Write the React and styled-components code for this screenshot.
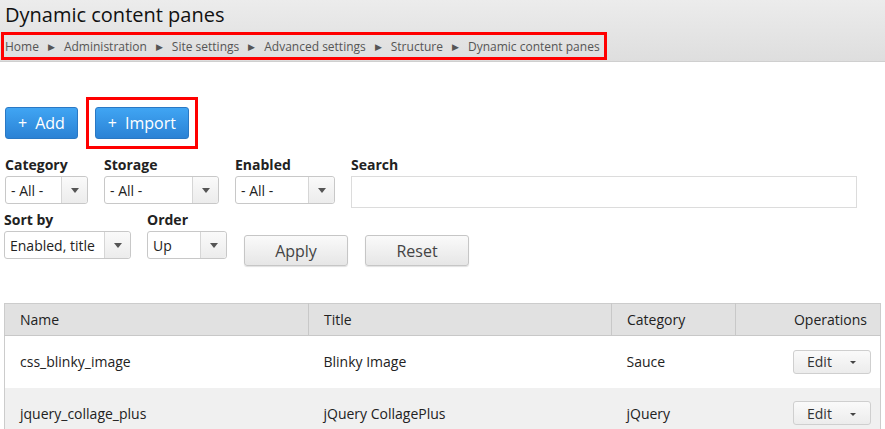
import React from "react";
import styled, { createGlobalStyle } from "styled-components";

const Global = createGlobalStyle`
  html, body { margin: 0; padding: 0; background: #fff; }
  body { font-family: "Open Sans", "Noto Sans", sans-serif; color: #222; }
  * { box-sizing: border-box; }
`;

const Header = styled.header`
  height: 62px;
  background: linear-gradient(#ececec, #dedede);
  border-bottom: 1px solid #cfcfcf;
  padding: 1px 0 0 5px;
`;

const Title = styled.h1`
  margin: 0;
  font-weight: 400;
  font-size: 20px;
  line-height: 28px;
  color: #111;
`;

const Highlight = styled.div`
  display: inline-flex;
  border: 3px solid #f00;
  margin: 3px 0 0 -4px;
  padding: 0 4px 0 1px;
  height: 28px;
  align-items: center;
`;

const Crumbs = styled.nav`
  display: flex;
  align-items: center;
  font-size: 12px;
  color: #555;
`;

const Sep = styled.span`
  font-size: 9px;
  color: #555;
  margin: 0 9px 0 9px;
`;

const Main = styled.main`
  padding: 35px 4px 0 4px;
`;

const ActionRow = styled.div`
  display: flex;
  align-items: center;
  gap: 8px;
  height: 52px;
`;

const BlueButton = styled.button`
  font-family: inherit;
  height: 32px;
  padding: 0 ${p => p.$px || 11}px;
  border: 1px solid #2a78c4;
  border-radius: 3px;
  background: linear-gradient(#40a5f3, #2b82d5);
  color: #fff;
  font-size: 16px;
  cursor: pointer;
  margin-left: ${p => p.$ml || 0}px;
`;

const Plus = styled.span`
  margin-right: 8px;
`;

const RedBox = styled.div`
  border: 3px solid #f00;
  padding: 7px 6px;
  display: flex;
`;

const Filters = styled.div`
  display: flex;
  flex-direction: column;
  gap: 3px;
  margin-top: 7px;
`;

const FilterRow = styled.div`
  display: flex;
  align-items: flex-start;
`;

const Field = styled.div`
  display: flex;
  flex-direction: column;
  margin-right: ${p => p.$mr ?? 16}px;
  margin-left: ${p => p.$ml ?? 0}px;
`;

const Label = styled.label`
  font-weight: 700;
  font-size: 14px;
  line-height: 18px;
  color: #222;
  margin-bottom: 2px;
`;

const Select = styled.div`
  display: flex;
  width: ${p => p.$w}px;
  height: 28px;
  border: 1px solid #c8c8c8;
  border-radius: 3px;
  background: #fff;
  font-size: 14px;
`;

const SelectValue = styled.div`
  flex: 1;
  padding-left: 5px;
  display: flex;
  align-items: center;
  color: #222;
  white-space: nowrap;
  overflow: hidden;
`;

const SelectArrow = styled.div`
  width: 26px;
  border-left: 1px solid #d6d6d6;
  background: linear-gradient(#fafafa, #ececec);
  border-radius: 0 3px 3px 0;
  display: flex;
  align-items: center;
  justify-content: center;
`;

const Caret = styled.span`
  width: 0;
  height: 0;
  border-left: 4px solid transparent;
  border-right: 4px solid transparent;
  border-top: 5px solid #555;
`;

const SearchInput = styled.div`
  width: 506px;
  height: 32px;
  border: 1px solid #dcdcdc;
`;

const GrayButton = styled.button`
  font-family: inherit;
  width: 104px;
  height: 31px;
  border: 1px solid #c6c6c6;
  border-radius: 3px;
  background: linear-gradient(#fafafa, #e6e6e6);
  box-shadow: 0 1px 1px rgba(0,0,0,0.12);
  color: #444;
  font-size: 16px;
  margin-left: ${p => p.$ml || 0}px;
  margin-top: 24px;
`;

const Table = styled.table`
  margin-top: 37px;
  width: 877px;
  border-collapse: collapse;
  font-size: 14px;
  border: 1px solid #ccc;
`;

const Th = styled.th`
  background: #e1e1e1;
  font-weight: 400;
  text-align: ${p => p.$right ? "right" : "left"};
  padding: 0 ${p => p.$right ? 13 : 15}px 0 15px;
  height: 32px;
  border-left: 1px solid #c8c8c8;
  border-bottom: 1px solid #c8c8c8;
  color: #222;
  width: ${p => p.$w}px;
  &:first-child { border-left: none; }
`;

const Tr = styled.tr`
  background: ${p => p.$alt ? "#f0f0f0" : "#fff"};
`;

const Td = styled.td`
  padding: 0 ${p => p.$right ? 9 : 15}px 0 15px;
  height: 52px;
  text-align: ${p => p.$right ? "right" : "left"};
  color: #222;
`;

const EditBtn = styled.div`
  display: inline-flex;
  align-items: center;
  width: 78px;
  height: 24px;
  border: 1px solid #cfcfcf;
  border-radius: 3px;
  background: linear-gradient(#fafafa, #ececec);
  font-size: 14px;
  padding-left: 13px;
  gap: 18px;
  color: #333;
`;

const SmallCaret = styled.span`
  width: 0;
  height: 0;
  margin-top: 2px;
  border-left: 3.5px solid transparent;
  border-right: 3.5px solid transparent;
  border-top: 3.5px solid #444;
`;

const crumbs = ["Home", "Administration", "Site settings", "Advanced settings", "Structure", "Dynamic content panes"];

function SelectBox({ w, value }) {
  return (
    <Select $w={w}>
      <SelectValue>{value}</SelectValue>
      <SelectArrow><Caret /></SelectArrow>
    </Select>
  );
}

const rows = [
  ["css_blinky_image", "Blinky Image", "Sauce"],
  ["jquery_collage_plus", "jQuery CollagePlus", "jQuery"],
];

export default function App() {
  return (
    <>
      <Global />
      <Header>
        <Title>Dynamic content panes</Title>
        <Highlight>
          <Crumbs>
            {crumbs.map((c, i) => (
              <React.Fragment key={c}>
                {i > 0 && <Sep>▶</Sep>}
                <span>{c}</span>
              </React.Fragment>
            ))}
          </Crumbs>
        </Highlight>
      </Header>
      <Main>
        <ActionRow>
          <BlueButton $ml={1} $px={12}><Plus>+</Plus>Add</BlueButton>
          <RedBox>
            <BlueButton $px={12}><Plus>+</Plus>Import</BlueButton>
          </RedBox>
        </ActionRow>
        <Filters>
          <FilterRow>
            <Field $ml={1}><Label>Category</Label><SelectBox w={83} value="- All -" /></Field>
            <Field><Label>Storage</Label><SelectBox w={115} value="- All -" /></Field>
            <Field><Label>Enabled</Label><SelectBox w={100} value="- All -" /></Field>
            <Field $mr={0}><Label>Search</Label><SearchInput /></Field>
          </FilterRow>
          <FilterRow>
            <Field><Label>Sort by</Label><SelectBox w={127} value="Enabled, title" /></Field>
            <Field><Label>Order</Label><SelectBox w={80} value="Up" /></Field>
            <GrayButton $ml={1}>Apply</GrayButton>
            <GrayButton $ml={17}>Reset</GrayButton>
          </FilterRow>
        </Filters>
        <Table>
          <thead>
            <tr>
              <Th $w={304}>Name</Th>
              <Th $w={303}>Title</Th>
              <Th $w={124}>Category</Th>
              <Th $right>Operations</Th>
            </tr>
          </thead>
          <tbody>
            {rows.map((r, i) => (
              <Tr key={r[0]} $alt={i % 2 === 1}>
                <Td>{r[0]}</Td>
                <Td>{r[1]}</Td>
                <Td>{r[2]}</Td>
                <Td $right><EditBtn>Edit<SmallCaret /></EditBtn></Td>
              </Tr>
            ))}
          </tbody>
        </Table>
      </Main>
    </>
  );
}
